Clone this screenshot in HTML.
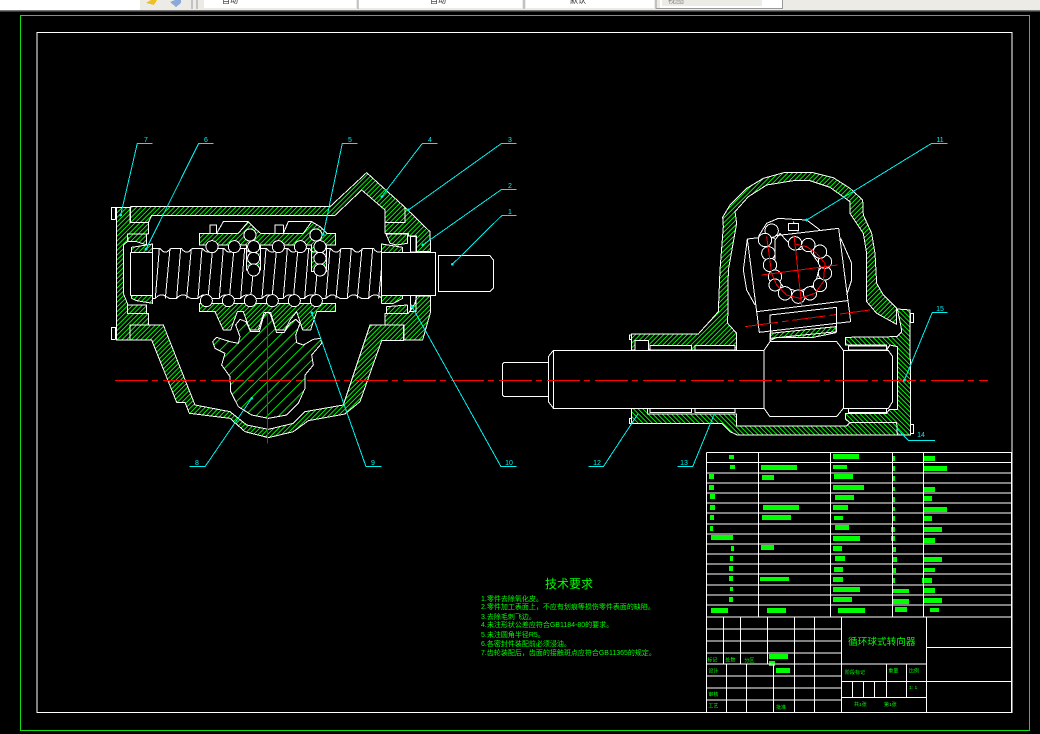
<!DOCTYPE html>
<html><head><meta charset="utf-8"><style>
html,body{margin:0;padding:0;background:#000;width:1040px;height:734px;overflow:hidden}
svg{display:block;position:absolute;left:0;top:0}
text{font-family:"Liberation Sans","WenQuanYi Zen Hei","Noto Sans CJK SC",sans-serif}
</style></head><body>
<svg width="1040" height="734" viewBox="0 0 1040 734" xmlns="http://www.w3.org/2000/svg" shape-rendering="crispEdges">
<defs>
<pattern id="h" width="10" height="10" patternUnits="userSpaceOnUse" patternTransform="rotate(45)"><rect width="10" height="10" fill="#000"/><rect x="0" width="3.4" height="10" fill="#00ff00"/></pattern>
<pattern id="b" width="10" height="10" patternUnits="userSpaceOnUse" patternTransform="rotate(-45)"><rect width="10" height="10" fill="#000"/><rect x="0" width="3.4" height="10" fill="#00ff00"/></pattern>
<pattern id="w" width="24" height="24" patternUnits="userSpaceOnUse" patternTransform="rotate(45)"><rect width="24" height="24" fill="#000"/><rect x="0" width="3" height="24" fill="#00e000"/></pattern>
<clipPath id="sc"><rect x="158" y="340" width="687" height="180"/></clipPath>
<g id="t" fill="none" stroke="#fff" stroke-width="3">
<path d="M0,355 H22 Q32,370 44,365 Q50,360 56,355 H64"/>
<path d="M0,505 H8 Q20,492 32,495 L50,505 H64"/>
<path d="M20,355 L8,505 M52,355 L38,505"/>
</g>
</defs>
<rect x="0" y="0" width="1040" height="10" fill="#ecebe6"/>
<rect x="0" y="0" width="140" height="10" fill="#fff"/>
<rect x="204" y="0" width="152" height="8" fill="#fff"/>
<rect x="358" y="0" width="164" height="8" fill="#fff"/>
<rect x="526" y="0" width="128" height="8" fill="#fff"/>
<rect x="660" y="0" width="122" height="8" fill="#fff"/>
<rect x="662" y="0" width="100" height="6" fill="#ecebe6"/>
<path d="M192,0V9M197,0V9M358,0V9M524,0V9M656,0V9M782.500,0V8.500H656" stroke="#999" fill="none"/>
<path d="M146,3l5,-3h6l-3,5z" fill="#f0c020"/><path d="M170,2l5,-2h6v3l-5,4z" fill="#8aa8d8"/>
<text x="222" y="3" font-size="8" fill="#222">自动</text><text x="430" y="3" font-size="8" fill="#222">自动</text><text x="570" y="3" font-size="8" fill="#222">默认</text><text x="668" y="3" font-size="8" fill="#888">视图</text>
<rect x="0" y="10" width="1040" height="1.500" fill="#777"/>
<rect x="20.500" y="15.500" width="1009" height="715" fill="none" stroke="#10e010"/>
<rect x="37" y="32.500" width="975" height="680" fill="none" stroke="#fff"/>

<g transform="translate(100 130) scale(.33333)" stroke="#fff" stroke-width="3" fill="none" stroke-linejoin="round">
<rect x="34" y="232" width="12" height="36"/><rect x="34" y="592" width="12" height="36"/>
<path fill="url(#h)" d="M50,232H90V278H145V312H82V335L70,345V490L82,520V550H145V585H90V630H50Z"/>
<path fill="url(#h)" d="M92,230H690L800,128L915,232V278H855V240L785,180L705,256H155L145,278H92Z"/>
<path fill="url(#h)" d="M915,232L990,305L992,365H950V318H925V310H855V278H915Z"/>
<path fill="url(#h)" d="M950,498H992V545L968,630H912V585H855V550H925L945,520Z"/>
<path fill="url(#h)" d="M90,630H155L230,817H255L268,850L390,865L435,905L505,923L580,905L625,872L735,852L780,815L845,632H910V585H810L730,825L615,845L580,880L505,898L440,885L390,845L285,825L190,585H90Z"/>
<path fill="url(#h)" d="M82,312H140V345L110,335L85,335Z M82,525H140V550H82Z M858,312H922V340L890,345L870,340Z M860,530L922,525V550H860Z"/>
<path fill="url(#h)" d="M95,352L158,342V368H95Z M95,497H158V520L110,512L95,505Z M845,342L908,352V368H845Z M845,497H908V505L880,520H845Z"/>
<rect x="92" y="368" width="66" height="128"/>
<rect x="845" y="368" width="162" height="128"/>
<path d="M1015,377H1170L1180,390V475L1170,484H1015Z M932,320H948V366H932Z M932,497H948V545H932Z"/>
<path fill="url(#h)" d="M298,310H415L445,275L470,300L482,310H610L635,275L660,290L680,310H707V345H680V425H635V345H482V420H440V345H298Z"/>
<path d="M330,285H350V310H330Z M525,285H550V310H525Z M350,310L370,275H445 M550,310L565,275H635"/>
<g clip-path="url(#sc)">
<use href="#t" x="158"/><use href="#t" x="222"/><use href="#t" x="286"/><use href="#t" x="350"/><use href="#t" x="414"/><use href="#t" x="478"/><use href="#t" x="542"/><use href="#t" x="606"/><use href="#t" x="670"/><use href="#t" x="734"/><use href="#t" x="798"/>
</g>
<path d="M845,355V505M158,355V505"/>
<path fill="url(#w)" stroke-width="3" d="M407,585L420,568L438,575L452,605H478L490,560L502,543L512,555L530,608H552L570,580L587,568L600,580L587,615L590,638L610,645L640,628L662,625L665,640L635,675L640,705L615,735V775L595,820L560,855L505,865L455,855L415,830L392,785L390,740L365,705L375,670L345,655L338,635L350,622L390,635L415,640L420,620Z"/>
<path fill="url(#h)" d="M298,520H707V545H650L632,600H608L590,545L570,570L555,600H528L512,548H492L475,600H450L430,545H412L392,600H370L345,545H298Z"/>
<g fill="#000">
<circle cx="336" cy="350" r="18"/><circle cx="403" cy="350" r="18"/><circle cx="535" cy="350" r="18"/><circle cx="601" cy="350" r="18"/>
<circle cx="450" cy="315" r="18"/><circle cx="461" cy="350" r="18"/><circle cx="461" cy="385" r="18"/><circle cx="461" cy="420" r="18"/>
<circle cx="648" cy="315" r="18"/><circle cx="660" cy="350" r="18"/><circle cx="660" cy="385" r="18"/><circle cx="660" cy="420" r="18"/>
<circle cx="319" cy="512" r="18"/><circle cx="385" cy="512" r="18"/><circle cx="451" cy="512" r="18"/><circle cx="517" cy="512" r="18"/><circle cx="583" cy="512" r="18"/><circle cx="649" cy="512" r="18"/>
</g>
<path d="M503,550V940" stroke="#f00"/>
</g>

<g transform="translate(500 130) scale(.33333)" stroke="#fff" stroke-width="3" fill="none" stroke-linejoin="round">
<path fill="url(#h)" d="M395,612H595L655,545L660,420L670,290L668,262L690,225L740,175L790,145L855,127H935L1000,143L1050,175L1088,210L1090,255L1115,310L1125,370L1130,460L1150,495L1190,535V583L1130,550L1100,515V370L1090,310L1050,250V215L990,172L930,152H880L800,165L745,200L705,245L710,280L685,420L683,580L710,610V660H445V632H405V660H395Z"/>
<path fill="url(#b)" d="M395,836H443V852H710V888H1040L1050,878H1190L1192,915H712L690,905L665,880H395Z"/>
<path fill="url(#b)" d="M1192,537L1230,540L1232,915H1192L1190,878H1050L1037,868V850H1160L1168,838H1192V650L1170,645L1160,660V645H1037V622L1190,620L1205,605L1203,590Z"/>
<path fill="url(#h)" d="M810,632V610L1008,590V608L940,622H830Z"/>
<path d="M388,615h7v14h-7z M388,866h7v14h-7z M1232,550h9v28h-9z M1232,883h9v28h-9z" />
<path fill="#000" d="M450,646H575V660H450Z M585,646H705V660H585Z M450,835H575V848H450Z M585,835H705V848H585Z M1045,648H1160V660H1045Z M1045,835H1160V848H1045Z"/>
<rect x="160" y="661" width="632" height="174" fill="#000"/>
<path fill="#000" d="M160,661L145,680V815L160,835Z M145,697H12L8,702V795L12,800H145Z"/>
<path fill="#000" d="M792,661L810,635H1010L1030,661V835L1010,860H810L792,835Z"/>
<path fill="#000" d="M1030,661H1165L1178,680V815L1165,835H1030Z"/>
<path d="M742,327L1016,295L1052,575L778,607Z M770,545L1042,512 M810,555L1010,532V605L812,625Z M742,327L730,420L740,480L765,525 M1022,325L1055,400V450L1040,495"/>
<path d="M775,320L800,280L835,265L880,268L920,270L960,300 M783,315L825,325 M880,275L895,305"/>
<path d="M840,310L885,360L925,355L960,405L945,465L895,485L850,470L820,435L825,380L825,330Z"/>
<g fill="#000">
<circle cx="815" cy="302" r="20"/><circle cx="795" cy="330" r="20"/><circle cx="805" cy="370" r="20"/><circle cx="810" cy="405" r="20"/><circle cx="825" cy="440" r="20"/><circle cx="855" cy="490" r="20"/><circle cx="825" cy="465" r="18"/><circle cx="895" cy="500" r="20"/><circle cx="930" cy="490" r="20"/><circle cx="960" cy="465" r="20"/><circle cx="975" cy="430" r="20"/><circle cx="975" cy="395" r="20"/><circle cx="960" cy="365" r="20"/><circle cx="925" cy="345" r="20"/><circle cx="885" cy="340" r="20"/>
<path d="M865,280h30v22h-30z"/>
</g>
<g stroke="#f00">
<path d="M800,320L815,430L830,465L860,495L900,505L945,490L970,455L975,400L950,370L920,350L885,342"/>
<path d="M785,435L1012,405 M882,315L905,525"/>
<path d="M735,590L1110,540" stroke-dasharray="100 12 20 12"/>
</g>
</g>

<path d="M115,380.500H988" stroke="#f00" stroke-width="1.200" stroke-dasharray="33 4 6 5" fill="none"/>

<g transform="translate(100 130) scale(.33333)" stroke="#00f0f0" stroke-width="3" fill="none">
<path d="M158,40H112L62,255M341,40H296L138,358M773,40H727L670,313M1013,40H967L845,200M1250,40H1205L925,240M1250,178H1205L968,345M1250,257H1205L1057,403M1250,1010H1203L935,528M845,1010H798L635,548M268,1010H315L455,805"/>
<path d="M1343,40H1295L920,270" transform="translate(1200 0)"/>
<path d="M1343,547H1297L1213,751M1305,931H1225L1190,895M532,1010H578L643,852M265,1010H310L415,850" transform="translate(1200 0)"/>
<g fill="#00f0f0" stroke="none">
<circle cx="62" cy="255" r="4"/><circle cx="138" cy="358" r="4"/><circle cx="670" cy="313" r="4"/><circle cx="845" cy="200" r="4"/><circle cx="925" cy="240" r="4"/><circle cx="968" cy="345" r="4"/><circle cx="1057" cy="403" r="4"/><circle cx="935" cy="528" r="4"/><circle cx="635" cy="548" r="4"/><circle cx="455" cy="805" r="4"/><circle cx="2120" cy="270" r="4"/><circle cx="2413" cy="751" r="4"/>
</g>
</g>
<g fill="#00f0f0" font-size="7" text-anchor="middle">
<text x="146" y="142">7</text><text x="206" y="142">6</text><text x="350" y="142">5</text><text x="430" y="142">4</text><text x="510" y="142">3</text><text x="510" y="188">2</text><text x="510" y="214">1</text>
<text x="509" y="465">10</text><text x="373" y="465">9</text><text x="197" y="465">8</text>
<text x="940" y="142">11</text><text x="940" y="311">15</text><text x="921" y="437">14</text><text x="684" y="465">13</text><text x="597" y="465">12</text>
</g>

<g transform="translate(700 450) scale(.33333)">
<g fill="#00ff00">
<path d="M87,15h15v12h-15z M90,45h15v12h-15z M27,72h15v15h-15z M27,105h15v15h-15z M30,132h15v15h-15z M30,165h15v15h-15z M30,195h12v15h-12z M30,228h9v15h-9z M33,255h66v15h-66z M93,288h9v15h-9z M90,318h9v15h-9z M87,348h12v15h-12z M87,378h12v15h-12z M90,411h9v12h-9z M87,441h12v15h-12z M33,474h51v15h-51z"/>
<path d="M183,45h108v15h-108z M186,75h36v15h-36z M189,165h108v15h-108z M186,195h87v15h-87z M183,285h39v15h-39z M180,381h87v12h-87z M201,474h57v15h-57z"/>
<path d="M399,12h78v15h-78z M399,45h42v12h-42z M402,72h57v15h-57z M399,105h93v15h-93z M405,135h57v15h-57z M399,165h45v15h-45z M402,198h27v12h-27z M405,225h42v15h-42z M399,258h81v15h-81z M399,288h27v15h-27z M405,318h30v15h-30z M402,351h27v15h-27z M399,381h30v15h-30z M399,411h81v15h-81z M399,441h57v15h-57z M414,474h81v15h-81z"/>
<path d="M576,18h9v15h-9z M576,48h9v15h-9z M576,78h9v15h-9z M576,111h9v12h-9z M576,141h9v15h-9z M576,171h9v12h-9z M576,198h9v15h-9z M573,231h12v15h-12z M573,258h12v15h-12z M576,291h12v15h-12z M576,321h15v15h-15z M576,354h12v15h-12z M576,384h9v15h-9z M576,417h51v12h-51z M579,447h48v15h-48z M585,471h36v15h-36z"/>
<path d="M670,18h35v15h-35z M670,48h71v15h-71z M670,111h35v15h-35z M670,138h26v15h-26z M670,171h71v15h-71z M670,198h26v15h-26z M670,231h56v15h-56z M670,264h35v15h-35z M670,321h56v15h-56z M670,354h35v12h-35z M666,384h30v15h-30z M670,414h35v15h-35z M670,444h56v15h-56z M690,474h27v12h-27z"/>
<path d="M207,612h57v15h-57z M207,633h18v15h-18z M228,654h42v15h-42z"/>
</g>
<path stroke="#fff" stroke-width="3" fill="none" d="M19,7H934M19,37H934M19,69H934M19,99H934M19,129H934M19,159H934M19,189H934M19,222H934M19,252H934M19,282H934M19,312H934M19,342H934M19,372H934M19,405H934M19,435H934M19,465H934M19,501H934M19,787H934M19,7V787M934,7V787M175,7V501M391,7V501M577,7V501M670,7V501
M19,537H424M19,573H424M19,609H424M19,642H679M19,678H424M19,714H424M19,750H424
M70,501V642M121,501V642M202,501V642M283,501V787M343,501V787M424,501V787M79,642V787M139,642V787M220,642V787
M679,501V787M679,592H934M424,694H934M424,742H679M559,642V742M619,642V742M457,694V742M490,694V742M523,694V742"/>
<g fill="#00ff00" font-size="21">
<text x="444" y="585" font-size="29">循环球式转向器</text>
<text x="22" y="634" font-size="15">标记</text><text x="76" y="634" font-size="15">处数</text><text x="133" y="636" font-size="15">分区</text>
<text x="25" y="667" font-size="15">设计</text><text x="25" y="738" font-size="15">审核</text><text x="25" y="773" font-size="15">工艺</text><text x="228" y="777" font-size="15">批准</text>
<text x="435" y="672" font-size="15">阶段标记</text><text x="565" y="667" font-size="15">重量</text><text x="627" y="668" font-size="15">比例</text><text x="627" y="717" font-size="15">1: 1</text>
<text x="462" y="768" font-size="15">共1张</text><text x="552" y="768" font-size="15">第1张</text>
</g>
</g>

<g fill="#00ff00" font-size="7">
<text x="545" y="588" font-size="12">技术要求</text>
<text x="481" y="601">1.零件去除氧化皮。</text>
<text x="481" y="609">2.零件加工表面上，不应有划痕等损伤零件表面的缺陷。</text>
<text x="481" y="619">3.去除毛刺飞边。</text>
<text x="481" y="627">4.未注形状公差应符合GB1184-80的要求。</text>
<text x="481" y="637">5.未注圆角半径R5。</text>
<text x="481" y="646">6.各密封件装配前必须浸油。</text>
<text x="481" y="655">7.齿轮装配后，齿面的接触斑点应符合GB11365的规定。</text>
</g>
</svg>
</body></html>
